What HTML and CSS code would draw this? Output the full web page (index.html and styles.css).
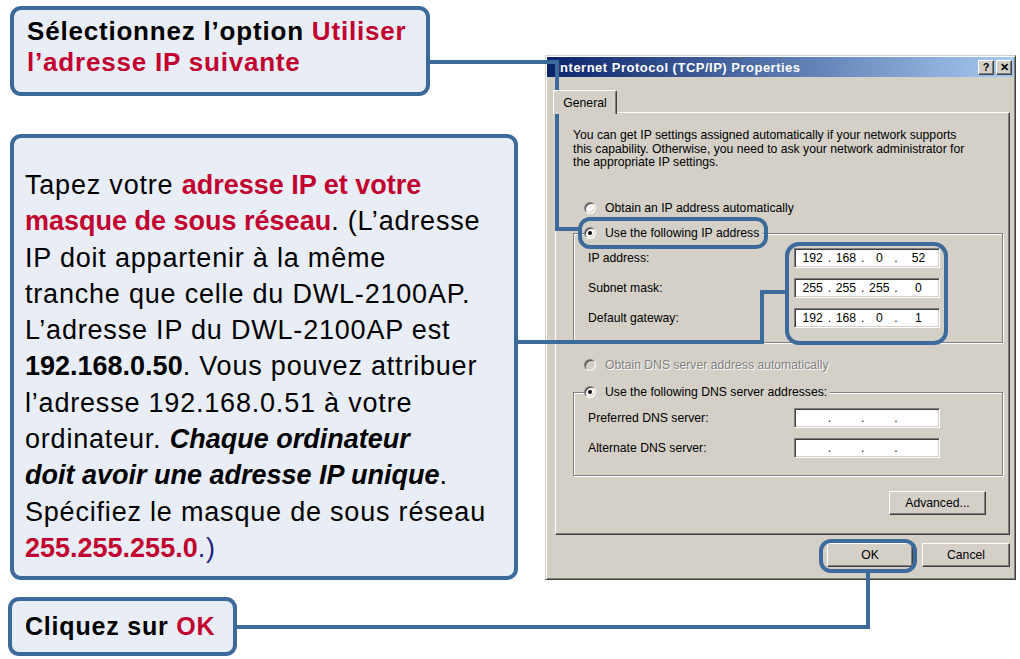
FILE: index.html
```html
<!DOCTYPE html>
<html lang="fr">
<head>
<meta charset="utf-8">
<title>Propriétés TCP/IP</title>
<link rel="stylesheet" href="styles.css">
</head>
<body>
<div class="page">
  <div class="notes">
    <div class="note note-top">Sélectionnez l’option <span class="red">Utiliser</span><br><span class="red">l’adresse IP suivante</span></div>
    <div class="note note-main">Tapez votre <b class="red">adresse IP et votre</b><br><b class="red">masque de sous réseau</b>. (L’adresse<br>IP doit appartenir à la même<br>tranche que celle du DWL-2100AP.<br>L’adresse IP du DWL-2100AP est<br><b>192.168.0.50</b>. Vous pouvez attribuer<br>l’adresse 192.168.0.51 à votre<br>ordinateur. <b><i>Chaque ordinateur</i></b><br><b><i>doit avoir une adresse IP unique</i></b>.<br>Spécifiez le masque de sous réseau<br><b class="red">255.255.255.0</b><span class="navy">.)</span></div>
    <div class="note note-ok">Cliquez sur&nbsp;<span class="red">OK</span></div>
  </div>

  <div class="dialog">
    <div class="titlebar">
      <span class="title">Internet Protocol (TCP/IP) Properties</span>
      <span class="tbtns"><span class="tbtn">?</span><span class="tbtn">✕</span></span>
    </div>
    <div class="dlg-body">
      <div class="tabs"><span class="tab">General</span></div>
      <div class="panel">
        <p class="intro">You can get IP settings assigned automatically if your network supports<br>this capability. Otherwise, you need to ask your network administrator for<br>the appropriate IP settings.</p>
        <div class="opt opt-first"><span class="radio"></span>Obtain an IP address automatically</div>
        <div class="group group-ip">
          <div class="legend"><span class="radio checked"></span>Use the following IP address</div>
          <div class="row row-first"><span class="label">IP address:</span>
            <span class="ipfield"><span class="seg">192</span><span class="dot">.</span><span class="seg">168</span><span class="dot">.</span><span class="seg">0</span><span class="dot">.</span><span class="seg seg-last">52</span></span></div>
          <div class="row"><span class="label">Subnet mask:</span>
            <span class="ipfield"><span class="seg">255</span><span class="dot">.</span><span class="seg">255</span><span class="dot">.</span><span class="seg">255</span><span class="dot">.</span><span class="seg seg-last">0</span></span></div>
          <div class="row"><span class="label">Default gateway:</span>
            <span class="ipfield"><span class="seg">192</span><span class="dot">.</span><span class="seg">168</span><span class="dot">.</span><span class="seg">0</span><span class="dot">.</span><span class="seg seg-last">1</span></span></div>
        </div>
        <div class="opt opt-dns disabled"><span class="radio"></span>Obtain DNS server address automatically</div>
        <div class="group group-dns">
          <div class="legend"><span class="radio checked"></span>Use the following DNS server addresses:</div>
          <div class="row row-first-dns"><span class="label">Preferred DNS server:</span>
            <span class="ipfield"><span class="seg"></span><span class="dot">.</span><span class="seg"></span><span class="dot">.</span><span class="seg"></span><span class="dot">.</span><span class="seg seg-last"></span></span></div>
          <div class="row"><span class="label">Alternate DNS server:</span>
            <span class="ipfield"><span class="seg"></span><span class="dot">.</span><span class="seg"></span><span class="dot">.</span><span class="seg"></span><span class="dot">.</span><span class="seg seg-last"></span></span></div>
        </div>
        <div class="adv-row"><span class="btn btn-adv">Advanced...</span></div>
      </div>
      <div class="btn-row"><span class="btn btn-ok">OK</span><span class="btn btn-cancel">Cancel</span></div>
    </div>
  </div>

  <svg class="wires" width="1020" height="659" viewBox="0 0 1020 659">
    <path d="M430 62 H557 V229 H580"/>
    <rect x="580" y="219" width="186" height="28" rx="10"/>
    <path d="M518 342 H762 V292 H787"/>
    <rect x="787" y="244" width="159" height="99" rx="12"/>
    <path d="M237 627 H868 V572"/>
    <rect x="821" y="541" width="94" height="30" rx="10"/>
  </svg>
</div>
</body>
</html>
```
FILE: styles.css
```css
body {
  margin: 0;
  background: #fff;
}

.page {
  position: relative;
  width: 1020px;
  height: 659px;
  display: flex;
  overflow: hidden;
  font-family: "Liberation Sans", Arial, sans-serif;
}

/* ---------- callout notes ---------- */
.notes {
  width: 545px;
  flex: none;
  display: flex;
  flex-direction: column;
  align-items: flex-start;
}

.note {
  box-sizing: border-box;
  border: 4px solid #3b6a9b;
  border-radius: 11px;
  background: #e9edf5;
  color: #000;
  font-size: 26px;
  letter-spacing: 0.8px;
}

.red { color: #c1002f; }
.navy { color: #1f1f86; }

.note-top {
  margin: 6px 0 0 10px;
  width: 420px;
  height: 90px;
  padding: 6px 0 0 13px;
  font-weight: bold;
  line-height: 31px;
}

.note-main {
  margin: 38px 0 0 10px;
  width: 508px;
  height: 446px;
  padding: 29px 0 0 11px;
  font-size: 27px;
  line-height: 36.3px;
}

.note-main b {
  letter-spacing: 0;
}

.note-ok {
  margin: 17px 0 0 8px;
  width: 229px;
  height: 59px;
  padding: 0 0 0 13px;
  font-size: 25px;
  font-weight: bold;
  display: flex;
  align-items: center;
}

/* ---------- dialog ---------- */
.dialog {
  box-sizing: border-box;
  margin-top: 55px;
  width: 471px;
  height: 525px;
  background: #d4d0c8;
  border: 1px solid;
  border-color: #d4d0c8 #404040 #404040 #d4d0c8;
  box-shadow: inset 1px 1px #fff, inset -1px -1px #808080;
  padding: 1px;
  display: flex;
  flex-direction: column;
  font-size: 12.2px;
  color: #000;
}

.titlebar {
  height: 20px;
  flex: none;
  background: linear-gradient(90deg, #0a246a, #a6caf0);
  display: flex;
  align-items: center;
  justify-content: space-between;
  padding: 0 2px 0 9px;
  color: #fff;
  font-weight: bold;
  font-size: 13px;
  letter-spacing: 0.5px;
}

.tbtns {
  display: flex;
  gap: 2px;
}

.tbtn {
  box-sizing: border-box;
  width: 16px;
  height: 15px;
  background: #d4d0c8;
  border: 1px solid;
  border-color: #fff #404040 #404040 #fff;
  box-shadow: inset -1px -1px #808080;
  color: #000;
  font-size: 11px;
  letter-spacing: 0;
  display: flex;
  align-items: center;
  justify-content: center;
  line-height: 1;
}

.dlg-body {
  padding: 0 4px 0 8px;
}

.tabs {
  margin-top: 13px;
  height: 22px;
  display: flex;
}

.tab {
  box-sizing: border-box;
  position: relative;
  z-index: 1;
  margin-left: -2px;
  width: 64px;
  height: 24px;
  background: #d4d0c8;
  border: 1px solid;
  border-bottom: none;
  border-color: #fff #404040 #404040 #fff;
  box-shadow: inset -1px 0 #808080;
  border-radius: 2px 2px 0 0;
  display: flex;
  align-items: center;
  justify-content: center;
}

.panel {
  box-sizing: border-box;
  height: 423px;
  border: 1px solid;
  border-color: #fff #404040 #404040 #fff;
  box-shadow: inset -1px -1px #808080, inset 1px 1px #d4d0c8;
  padding: 16px 0 0 17px;
}

.intro {
  margin: 0;
  line-height: 13.5px;
}

.opt {
  height: 16px;
  display: flex;
  align-items: center;
  margin-left: 11px;
}

.opt-first { margin-top: 30.5px; }
.opt-dns { margin-top: 14px; }

.disabled {
  color: #808080;
  text-shadow: 1px 1px #fff;
}

.radio {
  box-sizing: border-box;
  width: 12px;
  height: 12px;
  flex: none;
  margin-right: 9px;
  border-radius: 50%;
  background: #fff;
  border: 1px solid;
  border-color: #808080 #fff #fff #808080;
  box-shadow: inset 1px 1px #404040, inset -1px -1px #d4d0c8;
  display: flex;
  align-items: center;
  justify-content: center;
}

.disabled .radio { background: #d4d0c8; }

.radio.checked::after {
  content: "";
  width: 4px;
  height: 4px;
  border-radius: 50%;
  background: #000;
}

.group {
  box-sizing: border-box;
  width: 430px;
  border: 1px solid #808080;
  box-shadow: inset 1px 1px #fff, 1px 1px #fff;
}

.group-ip {
  margin-top: 17px;
  padding-bottom: 14px;
}

.group-dns {
  margin-top: 19px;
  padding-bottom: 17px;
}

.legend {
  width: fit-content;
  height: 16px;
  margin: -9px 0 0 10px;
  padding-right: 3px;
  display: flex;
  align-items: center;
  background: #d4d0c8;
}

.row {
  height: 20px;
  display: flex;
  align-items: center;
  padding-left: 14px;
  margin-top: 10px;
}

.row-first { margin-top: 7px; }
.row-first-dns { margin-top: 8px; }

.label {
  width: 206px;
  flex: none;
}

.ipfield {
  box-sizing: border-box;
  width: 146px;
  height: 20px;
  background: #fff;
  border: 1px solid;
  border-color: #808080 #fff #fff #808080;
  box-shadow: inset 1px 1px #404040, inset -1px -1px #d4d0c8;
  padding-left: 3px;
  display: flex;
  align-items: center;
}

.seg {
  width: 30px;
  text-align: center;
}

.seg-last { width: 42px; }

.dot {
  width: 4px;
  text-align: center;
}

.adv-row {
  display: flex;
  justify-content: flex-end;
  margin-top: 15px;
  padding-right: 23px;
}

.btn {
  box-sizing: border-box;
  height: 24px;
  background: #d4d0c8;
  border: 1px solid;
  border-color: #fff #404040 #404040 #fff;
  box-shadow: inset -1px -1px #808080;
  display: flex;
  align-items: center;
  justify-content: center;
}

.btn-adv { width: 97px; }

.btn-row {
  display: flex;
  justify-content: flex-end;
  gap: 9px;
  margin-top: 8px;
}

.btn-ok { width: 86px; }
.btn-cancel { width: 88px; }

/* ---------- connectors overlay ---------- */
.wires {
  position: absolute;
  left: 0;
  top: 0;
  pointer-events: none;
  fill: none;
  stroke: #3b6a9b;
  stroke-width: 4;
}
```
